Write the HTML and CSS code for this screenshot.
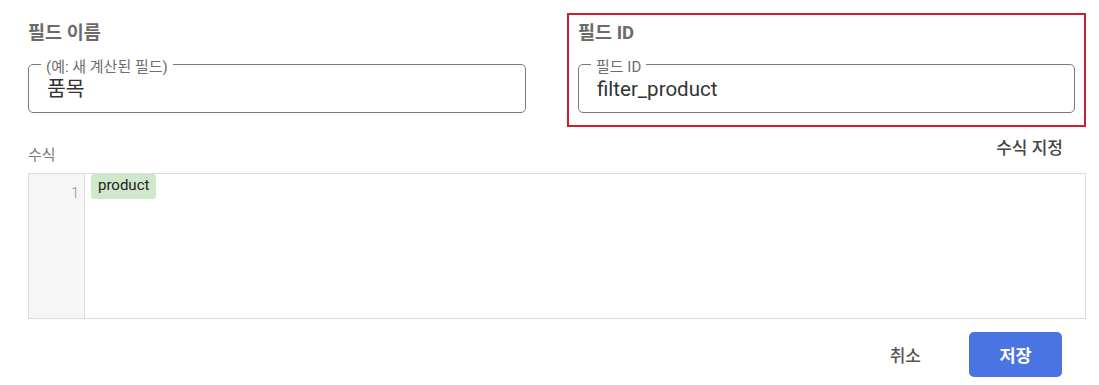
FILE: index.html
```html
<!DOCTYPE html>
<html>
<head>
    <title>계산된 필드</title>
    <meta charset="UTF-8">
    <link rel="stylesheet" href="styles.css">
</head>
<body>
    <div id="dialog">
        <div class="fields">
            <div class="field">
                <div class="field-title">필드 이름</div>
                <div class="outlined">
                    <span class="legend">(예: 새 계산된 필드)</span>
                    <div class="value">품목</div>
                </div>
            </div>
            <div class="field highlighted">
                <div class="field-title">필드 ID</div>
                <div class="outlined">
                    <span class="legend">필드 ID</span>
                    <div class="value">filter_product</div>
                </div>
            </div>
        </div>
        <div class="formula-head">
            <span class="formula-label">수식</span>
            <span class="formula-action">수식 지정</span>
        </div>
        <div class="editor">
            <div class="gutter"><span class="line-no">1</span></div>
            <div class="code"><span class="chip">product</span></div>
        </div>
        <div class="actions">
            <button class="btn-text">취소</button>
            <button class="btn-primary">저장</button>
        </div>
    </div>
</body>
</html>
```

FILE: styles.css
```css
body {
    margin: 0;
    background-color: #FFFFFF;
    font-family: Roboto, "Noto Sans CJK KR", sans-serif;
}
#dialog {
    padding: 13px 13px 0 28px;
}
.fields {
    display: grid;
    grid-template-columns: 498px 519px;
    column-gap: 41px;
}
.field {
    border: 2px solid transparent;
    border-left: 0;
    border-right: 0;
    padding: 8px 0 12px 0;
}
.field.highlighted {
    border: 2px solid #C8202D;
    padding: 8px 9px 12px 9px;
}
.field-title {
    font-size: 18.5px;
    line-height: 20px;
    font-weight: 700;
    color: #6B6B6B;
    margin-bottom: 21px;
}
.outlined {
    position: relative;
    box-sizing: border-box;
    height: 49px;
    border: 1px solid #7A7A7A;
    border-radius: 5px;
    padding: 12px 18px 0 18px;
}
.legend {
    position: absolute;
    top: -7px;
    left: 12px;
    padding: 0 5px;
    background-color: #FFFFFF;
    font-size: 15px;
    line-height: 18px;
    color: #6E6E6E;
}
.value {
    font-size: 20.5px;
    line-height: 24px;
    color: #333333;
}
.formula-head {
    display: flex;
    justify-content: space-between;
    height: 30px;
    margin: 10px 0 6px 0;
}
.formula-label {
    align-self: flex-end;
    font-size: 15px;
    line-height: 20px;
    color: #7A7A7A;
    margin-bottom: 2px;
}
.formula-action {
    align-self: flex-start;
    font-size: 17px;
    line-height: 20px;
    font-weight: 500;
    color: #444444;
    margin-top: 1px;
    padding-right: 23px;
}
.editor {
    display: flex;
    box-sizing: border-box;
    height: 146px;
    border: 1px solid #DDDDDD;
}
.gutter {
    width: 55px;
    background-color: #F6F6F6;
    border-right: 1px solid #DDDDDD;
    text-align: right;
}
.line-no {
    display: inline-block;
    margin: 11px 5px 0 0;
    font-size: 14px;
    line-height: 16px;
    font-weight: 300;
    color: #8A8A8A;
}
.code {
    flex: 1;
    padding: 0 0 0 6px;
}
.chip {
    display: inline-block;
    padding: 0 7px;
    height: 25px;
    line-height: 23px;
    border-radius: 3px;
    background-color: #CFE7CA;
    font-size: 15px;
    color: #222222;
}
.actions {
    display: flex;
    justify-content: flex-end;
    align-items: center;
    gap: 33px;
    margin: 13px 24px 0 0;
}
.btn-text {
    background: none;
    border: 0;
    padding: 0 15px;
    font-family: inherit;
    font-size: 17px;
    font-weight: 500;
    color: #555555;
}
.btn-primary {
    width: 93px;
    height: 45px;
    border: 0;
    border-radius: 5px;
    background-color: #4A74E2;
    color: #FFFFFF;
    font-family: inherit;
    font-size: 17.5px;
    font-weight: 700;
}
```
